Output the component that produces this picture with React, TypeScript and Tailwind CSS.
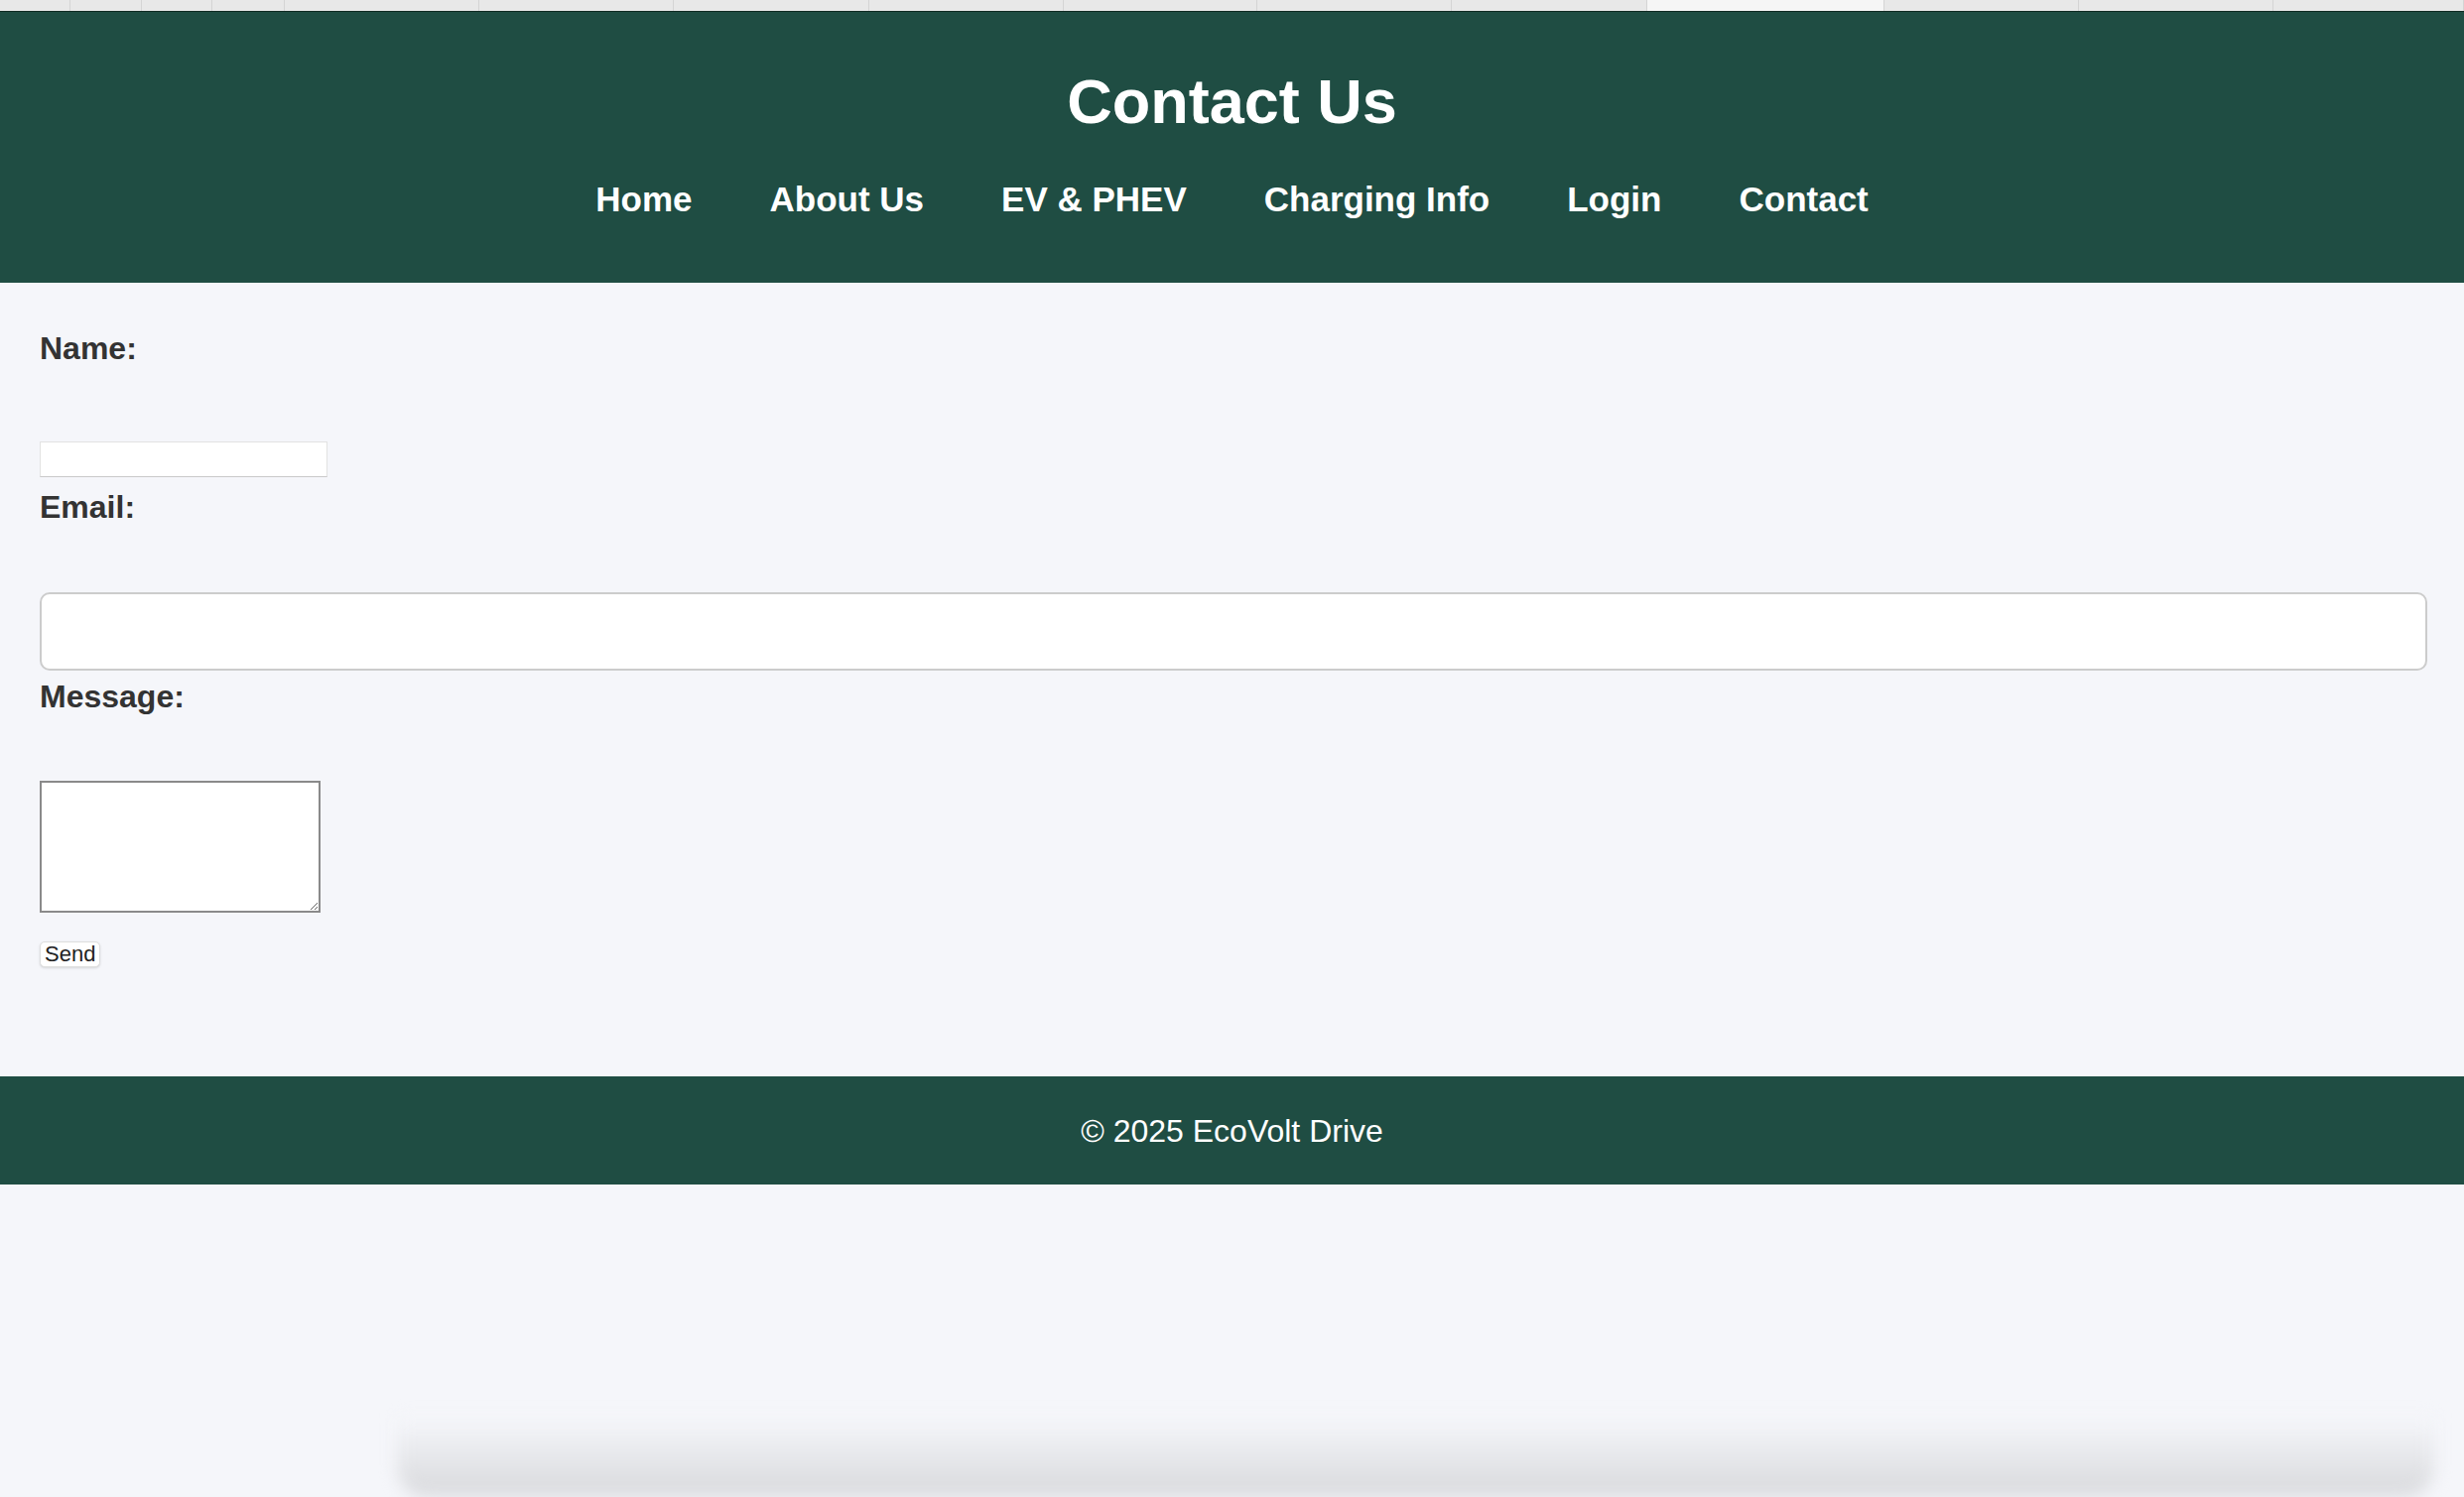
import React from 'react';

const tabs = [71, 72, 71, 73, 196, 196, 197, 196, 195, 196, 197, 239, 196, 196, 192];
const navLinks = ['Home', 'About Us', 'EV & PHEV', 'Charging Info', 'Login', 'Contact'];

export default function App() {
  return (
    <div className="min-h-screen flex flex-col bg-[#f5f6fa]" style={{ fontFamily: '"Liberation Sans", Arial, sans-serif' }}>
      {/* browser tab strip */}
      <div className="flex h-[12px] bg-[#e8e8e8] border-b border-[#0f2a22] overflow-hidden">
        {tabs.map((w, i) => (
          <div
            key={i}
            className={i === 11 ? 'h-full shrink-0 bg-[#f6f6f6] border-r border-[#d4d4d4]' : 'h-full shrink-0 border-r border-[#d4d4d4]'}
            style={{ width: w }}
          />
        ))}
      </div>

      {/* HEADER */}
      <header className="bg-[#1f4d43] h-[273px] flex flex-col items-center text-white">
        <h1 className="mt-[59px] text-[63px] font-bold leading-none">Contact Us</h1>
        <nav className="mt-[49px] flex gap-[78px]">
          {navLinks.map((l) => (
            <a key={l} href="#" className="text-[35px] font-bold leading-none">{l}</a>
          ))}
        </nav>
      </header>

      {/* FORM */}
      <main className="pl-[40px] pr-[37px] flex flex-col items-start text-[#333]">
        <label className="mt-[50px] text-[32px] font-bold leading-none h-[32px]">Name:</label>
        <input type="text" className="mt-[78px] w-[290px] h-[36px] bg-white border border-[#e2e2e2] border-b-[#c9c9c9]" />

        <label className="mt-[14px] text-[32px] font-bold leading-none h-[32px]">Email:</label>
        <input type="email" className="mt-[70px] w-full h-[79px] bg-white border-2 border-[#cccccc] rounded-[10px]" />

        <label className="mt-[10px] text-[32px] font-bold leading-none h-[32px]">Message:</label>
        <textarea className="mt-[69px] w-[283px] h-[133px] bg-white border-2 border-[#8a8a8a] resize" />

        <button className="mt-[29px] h-[26px] px-[4px] bg-white rounded-[5px] border border-[#dedede] shadow-sm text-[22px] leading-none text-[#222]">
          Send
        </button>
      </main>

      {/* FOOTER */}
      <footer className="mt-[110px] h-[109px] bg-[#1f4d43] flex items-center justify-center text-white text-[32px]">
        © 2025 EcoVolt Drive
      </footer>

      <div className="flex-1" />
      <div className="h-[80px] ml-[400px] mr-[30px] rounded-b-[30px] bg-gradient-to-b from-[#f5f6fa] to-[#d8d9dc] blur-sm" />
    </div>
  );
}
